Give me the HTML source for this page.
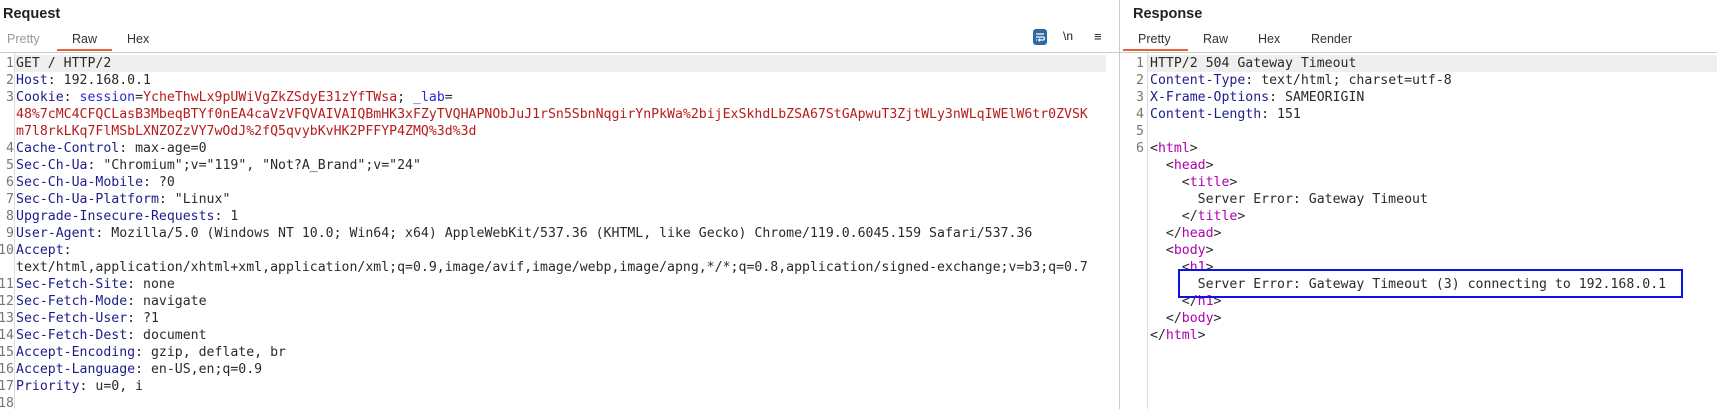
<!DOCTYPE html>
<html><head><meta charset="utf-8"><style>
*{margin:0;padding:0;box-sizing:border-box}
body{width:1717px;height:409px;background:#fff;position:relative;overflow:hidden;font-family:"Liberation Sans","DejaVu Sans",sans-serif;color:#222}
.a{position:absolute;white-space:pre}
.h{font-weight:bold;font-size:14.5px;top:6px}
.t{font-size:12.5px;top:32px;color:#333}
.m{font-family:"DejaVu Sans Mono","Liberation Mono",monospace;font-size:13.2px;line-height:17px;height:17px;margin-top:2px;color:#2a2a2a}
.n{color:#777;text-align:right;width:14px}
.k{color:#1d1d8a}.s{color:#2a2ad0}.r{color:#b71c1c}.g{color:#b000b0}
</style></head><body>
<div class="a h" style="left:3px">Request</div>
<div class="a h" style="left:1133px">Response</div>
<div class="a t" style="left:7px;color:#999">Pretty</div>
<div class="a t" style="left:72px">Raw</div>
<div class="a t" style="left:127px">Hex</div>
<div class="a" style="left:57px;top:49px;width:55px;height:2px;background:#e8603c"></div>
<div class="a t" style="left:1138px">Pretty</div>
<div class="a t" style="left:1203px">Raw</div>
<div class="a t" style="left:1258px">Hex</div>
<div class="a t" style="left:1311px">Render</div>
<div class="a" style="left:1123px;top:49px;width:65px;height:2px;background:#e8603c"></div>
<div class="a" style="left:0;top:52px;width:1717px;height:1px;background:#ccc"></div>
<div class="a" style="left:1119px;top:0;width:1px;height:409px;background:#ccc"></div>
<div class="a" style="left:1033px;top:29px;width:14px;height:16px;background:#2d6aa3;border-radius:3px"></div>
<svg class="a" style="left:1033px;top:29px" width="14" height="16"><path d="M3 5h8M3 8h7a1.5 1.5 0 0 1 0 3H6M3 11h1" stroke="#fff" stroke-width="1.2" fill="none"/><path d="M7 9.5l-1.5 1.5 1.5 1.5" stroke="#fff" stroke-width="1" fill="none"/></svg>
<div class="a" style="left:1063px;top:29px;font-size:12px;color:#222">\n</div>
<div class="a" style="left:1094px;top:29px;font-size:13px;color:#222">≡</div>
<div class="a" style="left:14px;top:53px;width:1px;height:356px;background:#ddd"></div>
<div class="a" style="left:1147px;top:53px;width:1px;height:356px;background:#ddd"></div>
<div class="a" style="left:15px;top:55px;width:1091px;height:17px;background:#efefef"></div>
<div class="a" style="left:1148px;top:55px;width:569px;height:17px;background:#efefef"></div>

<div class="a m n" style="left:0;top:53px">1</div><div class="a m" style="left:16px;top:53px">GET / HTTP/2</div>
<div class="a m n" style="left:0;top:70px">2</div><div class="a m" style="left:16px;top:70px"><span class="k">Host</span>: 192.168.0.1</div>
<div class="a m n" style="left:0;top:87px">3</div><div class="a m" style="left:16px;top:87px"><span class="k">Cookie</span>: <span class="s">session</span>=<span class="r">YcheThwLx9pUWiVgZkZSdyE31zYfTWsa</span>; <span class="s">_lab</span>=</div>
<div class="a m r" style="left:16px;top:104px">48%7cMC4CFQCLasB3MbeqBTYf0nEA4caVzVFQVAIVAIQBmHK3xFZyTVQHAPNObJuJ1rSn5SbnNqgirYnPkWa%2bijExSkhdLbZSA67StGApwuT3ZjtWLy3nWLqIWElW6tr0ZVSK</div>
<div class="a m r" style="left:16px;top:121px">m7l8rkLKq7FlMSbLXNZOZzVY7wOdJ%2fQ5qvybKvHK2PFFYP4ZMQ%3d%3d</div>
<div class="a m n" style="left:0;top:138px">4</div><div class="a m" style="left:16px;top:138px"><span class="k">Cache-Control</span>: max-age=0</div>
<div class="a m n" style="left:0;top:155px">5</div><div class="a m" style="left:16px;top:155px"><span class="k">Sec-Ch-Ua</span>: "Chromium";v="119", "Not?A_Brand";v="24"</div>
<div class="a m n" style="left:0;top:172px">6</div><div class="a m" style="left:16px;top:172px"><span class="k">Sec-Ch-Ua-Mobile</span>: ?0</div>
<div class="a m n" style="left:0;top:189px">7</div><div class="a m" style="left:16px;top:189px"><span class="k">Sec-Ch-Ua-Platform</span>: "Linux"</div>
<div class="a m n" style="left:0;top:206px">8</div><div class="a m" style="left:16px;top:206px"><span class="k">Upgrade-Insecure-Requests</span>: 1</div>
<div class="a m n" style="left:0;top:223px">9</div><div class="a m" style="left:16px;top:223px"><span class="k">User-Agent</span>: Mozilla/5.0 (Windows NT 10.0; Win64; x64) AppleWebKit/537.36 (KHTML, like Gecko) Chrome/119.0.6045.159 Safari/537.36</div>
<div class="a m n" style="left:0;top:240px;overflow:hidden;direction:rtl">10</div><div class="a m" style="left:16px;top:240px"><span class="k">Accept</span>:</div>
<div class="a m" style="left:16px;top:257px">text/html,application/xhtml+xml,application/xml;q=0.9,image/avif,image/webp,image/apng,*/*;q=0.8,application/signed-exchange;v=b3;q=0.7</div>
<div class="a m n" style="left:0;top:274px;overflow:hidden;direction:rtl">11</div><div class="a m" style="left:16px;top:274px"><span class="k">Sec-Fetch-Site</span>: none</div>
<div class="a m n" style="left:0;top:291px;overflow:hidden;direction:rtl">12</div><div class="a m" style="left:16px;top:291px"><span class="k">Sec-Fetch-Mode</span>: navigate</div>
<div class="a m n" style="left:0;top:308px;overflow:hidden;direction:rtl">13</div><div class="a m" style="left:16px;top:308px"><span class="k">Sec-Fetch-User</span>: ?1</div>
<div class="a m n" style="left:0;top:325px;overflow:hidden;direction:rtl">14</div><div class="a m" style="left:16px;top:325px"><span class="k">Sec-Fetch-Dest</span>: document</div>
<div class="a m n" style="left:0;top:342px;overflow:hidden;direction:rtl">15</div><div class="a m" style="left:16px;top:342px"><span class="k">Accept-Encoding</span>: gzip, deflate, br</div>
<div class="a m n" style="left:0;top:359px;overflow:hidden;direction:rtl">16</div><div class="a m" style="left:16px;top:359px"><span class="k">Accept-Language</span>: en-US,en;q=0.9</div>
<div class="a m n" style="left:0;top:376px;overflow:hidden;direction:rtl">17</div><div class="a m" style="left:16px;top:376px"><span class="k">Priority</span>: u=0, i</div>
<div class="a m n" style="left:0;top:393px;overflow:hidden;direction:rtl">18</div>

<div class="a m n" style="left:1130px;top:53px">1</div><div class="a m" style="left:1150px;top:53px">HTTP/2 504 Gateway Timeout</div>
<div class="a m n" style="left:1130px;top:70px">2</div><div class="a m" style="left:1150px;top:70px"><span class="k">Content-Type</span>: text/html; charset=utf-8</div>
<div class="a m n" style="left:1130px;top:87px">3</div><div class="a m" style="left:1150px;top:87px"><span class="k">X-Frame-Options</span>: SAMEORIGIN</div>
<div class="a m n" style="left:1130px;top:104px">4</div><div class="a m" style="left:1150px;top:104px"><span class="k">Content-Length</span>: 151</div>
<div class="a m n" style="left:1130px;top:121px">5</div>
<div class="a m n" style="left:1130px;top:138px">6</div><div class="a m" style="left:1150px;top:138px">&lt;<span class="g">html</span>&gt;</div>
<div class="a m" style="left:1150px;top:155px">  &lt;<span class="g">head</span>&gt;</div>
<div class="a m" style="left:1150px;top:172px">    &lt;<span class="g">title</span>&gt;</div>
<div class="a m" style="left:1150px;top:189px">      Server Error: Gateway Timeout</div>
<div class="a m" style="left:1150px;top:206px">    &lt;/<span class="g">title</span>&gt;</div>
<div class="a m" style="left:1150px;top:223px">  &lt;/<span class="g">head</span>&gt;</div>
<div class="a m" style="left:1150px;top:240px">  &lt;<span class="g">body</span>&gt;</div>
<div class="a m" style="left:1150px;top:257px">    &lt;<span class="g">h1</span>&gt;</div>
<div class="a m" style="left:1150px;top:274px;background:#fff">      Server Error: Gateway Timeout (3) connecting to 192.168.0.1</div>
<div class="a m" style="left:1150px;top:291px">    &lt;/<span class="g">h1</span>&gt;</div>
<div class="a m" style="left:1150px;top:308px">  &lt;/<span class="g">body</span>&gt;</div>
<div class="a m" style="left:1150px;top:325px">&lt;/<span class="g">html</span>&gt;</div>
<div class="a" style="left:1178px;top:269px;width:505px;height:29px;border:2px solid #0a14e6"></div>
</body></html>
